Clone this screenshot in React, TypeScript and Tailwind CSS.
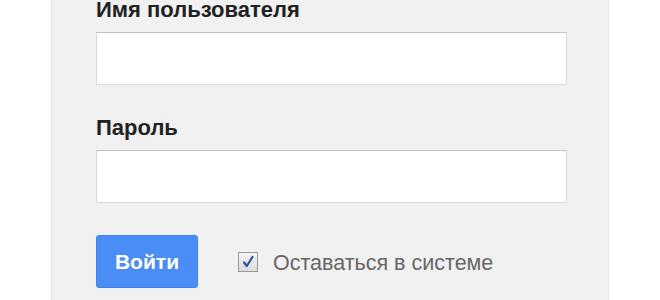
import React from "react";

export default function App() {
  return (
    <div className="w-[660px] h-[300px] overflow-hidden bg-white flex" style={{ fontFamily: '"Liberation Sans", Arial, sans-serif' }}>
      <div className="ml-[51px] w-[558px] h-[300px] bg-[#f1f1f1] border-l border-r border-[#e6e6e6] pl-[44px] flex flex-col">
        <label className="h-[20px] leading-[20px] text-[22px] font-bold text-[#222]">Имя пользователя</label>
        <div className="mt-[12px] w-[471px] h-[53px] bg-white border border-[#d9d9d9] border-t-[#c0c0c0]" />
        <label className="mt-[33px] h-[20px] leading-[20px] text-[22px] font-bold text-[#222]">Пароль</label>
        <div className="mt-[12px] w-[471px] h-[53px] bg-white border border-[#d9d9d9] border-t-[#c0c0c0]" />
        <div className="mt-[32px] flex items-center">
          <button className="w-[102px] h-[53px] rounded-[3px] bg-[#4a8df6] border border-[#3f82ee] text-white text-[21px] font-bold">
            Войти
          </button>
          <div className="ml-[40px] w-[20px] h-[20px] border border-[#9a9a9a] bg-gradient-to-b from-[#f4f4f4] to-[#dcdcdc] flex items-center justify-center">
            <svg width="14" height="14" viewBox="0 0 14 14">
              <path d="M3 7.5 L5.8 11 L11.5 2" fill="none" stroke="#2f4fa8" strokeWidth="2.2" strokeLinecap="round" strokeLinejoin="round" />
            </svg>
          </div>
          <span className="ml-[15px] pt-[3px] text-[21.5px] text-[#666]">Оставаться в системе</span>
        </div>
      </div>
    </div>
  );
}
